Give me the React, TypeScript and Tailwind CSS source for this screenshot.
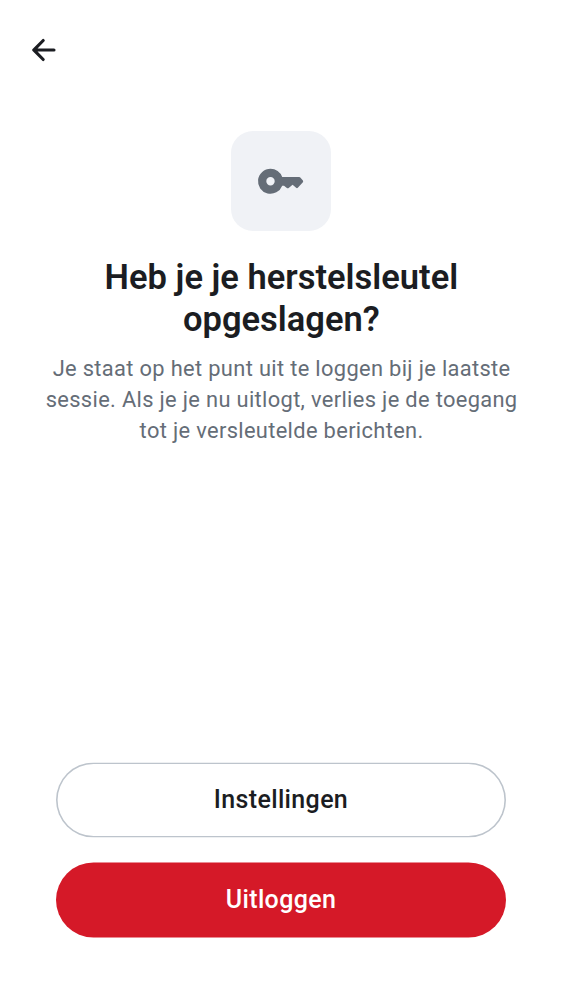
export default function App() {
  return (
    <main className="flex h-[1000px] w-[562px] flex-col items-center bg-white font-[Roboto,sans-serif]">
      <header className="flex h-[100px] w-full items-center pl-[25px]">
        <button aria-label="Terug" className="flex size-[38px] items-center justify-center text-[#1b1d22]">
          <svg viewBox="0 0 24 24" className="size-[38px] shrink-0" fill="currentColor">
            <path d="m12.207 5.293a1 1 0 0 1 0 1.414L7.914 11H18.3a1 1 0 1 1 0 2H7.914l4.293 4.293a1 1 0 0 1-1.414 1.414l-6-6a1 1 0 0 1 0-1.414l6-6a1 1 0 0 1 1.414 0Z" />
          </svg>
        </button>
      </header>
      <div className="mt-[31px] flex size-[100px] items-center justify-center rounded-[22px] bg-[#f0f2f6] text-[#656d77]">
        <svg viewBox="0 0 50 50" className="size-[50px]" fill="currentColor" fillRule="evenodd">
          <path d="M14.5 12.8a12.4 12.4 0 0 1 11.7 8.2h17.1q.6 0 1 .4l2.6 3.1q.6.9 0 1.7l-5.1 5.6q-.8.8-1.7 0l-3.5-3.1-3.9 3.3q-.9.7-1.8 0l-2.9-2.3h-1.8A12.5 12.5 0 1 1 14.5 12.8Zm0 8.3a4.2 4.2 0 1 0 0 8.4 4.2 4.2 0 0 0 0-8.4Z" />
        </svg>
      </div>
      <h1 className="mt-[25px] translate-x-[0.4px] text-center text-[34.5px] leading-[42.3px] font-semibold text-[#1b1d22]">Heb je je herstelsleutel<br />opgeslagen?</h1>
      <p className="mt-[12.4px] translate-x-[0.6px] translate-y-[0.3px] text-center text-[21.85px] leading-[31.2px] tracking-[0.34px] whitespace-nowrap text-[#656d77]">Je staat op het punt uit te loggen bij je laatste<br />sessie. Als je je nu uitlogt, verlies je de toegang<br />tot je versleutelde berichten.</p>
      <div className="mt-auto mb-[62px] flex w-[450px] -translate-y-[0.5px] flex-col gap-[25px] text-[25px] font-medium tracking-[0.35px]">
        <button className="h-[75px] rounded-full pb-px text-[#1b1d22] shadow-[inset_0_0_0_1.6px_#bdc4cc]">Instellingen</button>
        <button className="h-[75px] rounded-full bg-[#d51928] pb-px text-white">Uitloggen</button>
      </div>
    </main>
  );
}
